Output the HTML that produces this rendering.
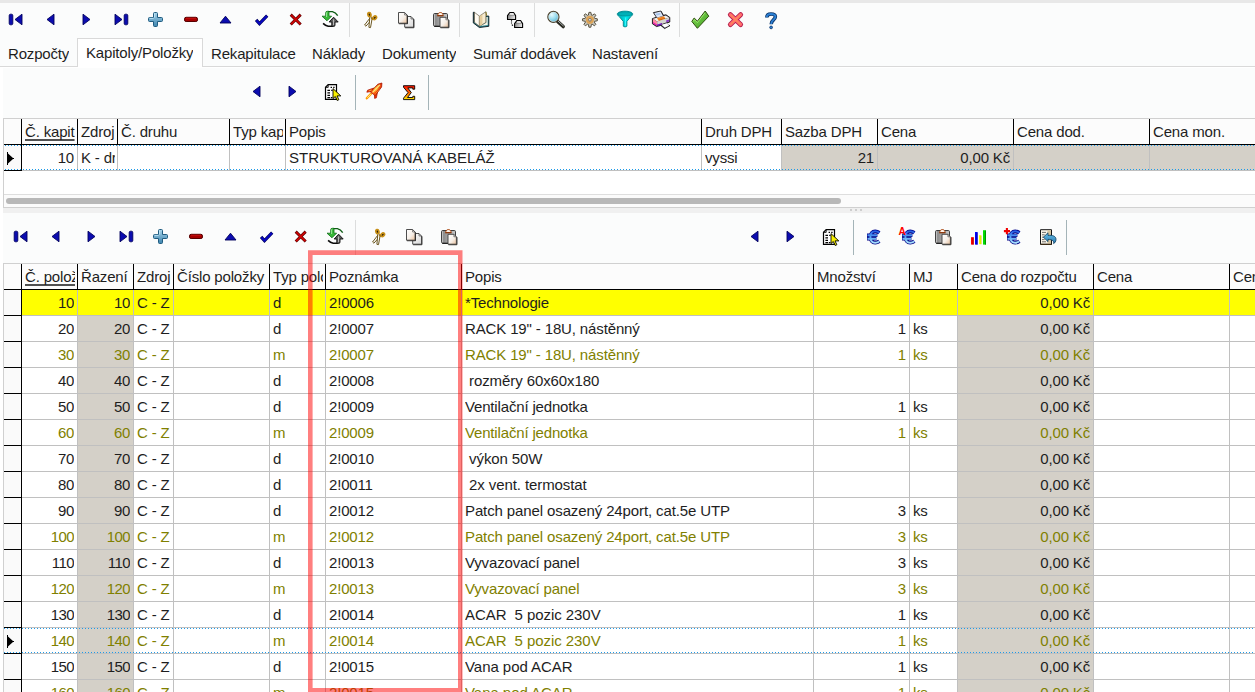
<!DOCTYPE html>
<html><head><meta charset="utf-8"><title>Rozpočty</title>
<style>
html,body{margin:0;padding:0;}
body{width:1255px;height:692px;overflow:hidden;position:relative;background:#fbfcfc;font-family:"Liberation Sans",sans-serif;font-size:15px;color:#1e1e1e;}
.a{position:absolute;}
.t{position:absolute;letter-spacing:-0.165px;white-space:nowrap;overflow:hidden;line-height:18px;height:18px;}
.r{text-align:right;}
.o{color:#808000;}
.vl{position:absolute;width:1px;background:#c0c0c0;}
.hl{position:absolute;height:1px;background:#c0c0c0;}
.bk{background:#000;}
.g{position:absolute;background:#d4d0c8;}
.dot{position:absolute;height:1px;background:repeating-linear-gradient(to right,#1e9be8 0,#1e9be8 1px,transparent 1px,transparent 3px);}
.sep{position:absolute;width:1px;background:#b4bcbc;}
svg{position:absolute;overflow:visible;}
</style></head><body>

<div class="a" style="left:0;top:0;width:1255px;height:3px;background:#e8e8e8"></div>
<div class="hl" style="left:0;top:66px;width:1255px;background:#d9d9d9"></div>
<div class="a" style="left:77px;top:38px;width:126px;height:29px;background:#fff;border:1px solid #d9d9d9;border-bottom:none;box-sizing:border-box"></div>
<div class="t" style="left:8px;top:45px">Rozpočty</div>
<div class="t" style="left:86px;top:44px">Kapitoly/Položky</div>
<div class="t" style="left:211px;top:45px">Rekapitulace</div>
<div class="t" style="left:312px;top:45px">Náklady</div>
<div class="t" style="left:382px;top:45px">Dokumenty</div>
<div class="t" style="left:473px;top:45px">Sumář dodávek</div>
<div class="t" style="left:592px;top:45px">Nastavení</div>
<div class="a" style="left:0;top:67px;width:1255px;height:1px;background:#fff"></div>
<div class="a" style="left:0;top:67px;width:3px;height:625px;background:#fff"></div>
<div class="a" style="left:3px;top:118px;width:1252px;height:90px;background:#fff;border:1px solid #d0d0d0;border-right:none;box-sizing:border-box"></div>
<div class="a" style="left:4px;top:119px;width:1251px;height:25px;background:#fcfcfc"></div>
<div class="g" style="left:782px;top:145px;width:473px;height:25px"></div>
<div class="a" style="left:4px;top:145px;width:17px;height:25px;background:#fafafa"></div>
<div class="vl bk" style="left:21px;top:119px;height:25px"></div>
<div class="vl" style="left:21px;top:145px;height:25px"></div>
<div class="vl bk" style="left:77px;top:119px;height:25px"></div>
<div class="vl" style="left:77px;top:145px;height:25px"></div>
<div class="vl bk" style="left:117px;top:119px;height:25px"></div>
<div class="vl" style="left:117px;top:145px;height:25px"></div>
<div class="vl bk" style="left:229px;top:119px;height:25px"></div>
<div class="vl" style="left:229px;top:145px;height:25px"></div>
<div class="vl bk" style="left:285px;top:119px;height:25px"></div>
<div class="vl" style="left:285px;top:145px;height:25px"></div>
<div class="vl bk" style="left:701px;top:119px;height:25px"></div>
<div class="vl" style="left:701px;top:145px;height:25px"></div>
<div class="vl bk" style="left:781px;top:119px;height:25px"></div>
<div class="vl" style="left:781px;top:145px;height:25px"></div>
<div class="vl bk" style="left:877px;top:119px;height:25px"></div>
<div class="vl" style="left:877px;top:145px;height:25px"></div>
<div class="vl bk" style="left:1013px;top:119px;height:25px"></div>
<div class="vl" style="left:1013px;top:145px;height:25px"></div>
<div class="vl bk" style="left:1149px;top:119px;height:25px"></div>
<div class="vl" style="left:1149px;top:145px;height:25px"></div>
<div class="hl bk" style="left:4px;top:144px;width:1251px"></div>
<div class="vl bk" style="left:21px;top:145px;height:26px"></div>
<div class="hl bk" style="left:4px;top:170px;width:18px"></div>
<div class="hl" style="left:4px;top:170px;width:1251px"></div>
<div class="hl bk" style="left:4px;top:170px;width:18px"></div>
<div class="dot" style="left:5px;top:145px;width:1250px"></div>
<div class="dot" style="left:5px;top:169px;width:1250px"></div>
<div class="t" style="left:25px;top:123px;width:50px"><span style="text-decoration:underline;text-decoration-skip-ink:none;text-underline-offset:1.6px;text-decoration-thickness:1.6px;text-decoration-color:#505050">Č. kapit</span></div>
<div class="t" style="left:81px;top:123px;width:34px"><span>Zdroj</span></div>
<div class="t" style="left:121px;top:123px;width:106px"><span>Č. druhu</span></div>
<div class="t" style="left:233px;top:123px;width:50px"><span>Typ kap</span></div>
<div class="t" style="left:289px;top:123px;width:410px"><span>Popis</span></div>
<div class="t" style="left:705px;top:123px;width:74px"><span>Druh DPH</span></div>
<div class="t" style="left:785px;top:123px;width:90px"><span>Sazba DPH</span></div>
<div class="t" style="left:881px;top:123px;width:130px"><span>Cena</span></div>
<div class="t" style="left:1017px;top:123px;width:130px"><span>Cena dod.</span></div>
<div class="t" style="left:1153px;top:123px;width:100px"><span>Cena mon.</span></div>
<div class="t r" style="left:22px;top:149px;width:52px">10</div>
<div class="t" style="left:81px;top:149px;width:34px">K - dr</div>
<div class="t" style="left:289px;top:149px;width:400px;letter-spacing:0.045px">STRUKTUROVANÁ KABELÁŽ</div>
<div class="t" style="left:705px;top:149px;width:70px">vyssi</div>
<div class="t r" style="left:782px;top:149px;width:92px">21</div>
<div class="t r" style="left:878px;top:149px;width:132px">0,00 Kč</div>
<svg style="left:7px;top:152px" width="8" height="13"><path d="M0 0H1V1.500L6 6H7V7H6L1 11.500V13H0Z" fill="#000"/></svg>
<div class="a" style="left:4px;top:195px;width:1251px;height:12px;background:#fbfbfb"></div>
<div class="hl" style="left:4px;top:194px;width:1251px;background:#dedede"></div>
<div class="a" style="left:6px;top:198px;width:835px;height:6px;border-radius:3px;background:#b8b8b8"></div>
<div class="a" style="left:3px;top:208px;width:1252px;height:5px;background:#f0f0f0"></div>
<div class="a" style="left:850px;top:209px;width:2px;height:2px;background:#cecece"></div>
<div class="a" style="left:855px;top:209px;width:2px;height:2px;background:#cecece"></div>
<div class="a" style="left:860px;top:209px;width:2px;height:2px;background:#cecece"></div>
<div class="a" style="left:3px;top:263px;width:1252px;height:440px;background:#fff;border:1px solid #d0d0d0;border-right:none;box-sizing:border-box"></div>
<div class="a" style="left:4px;top:264px;width:1251px;height:25px;background:#fcfcfc"></div>
<div class="a" style="left:22px;top:290px;width:1233px;height:25px;background:#ffff00"></div>
<div class="g" style="left:78px;top:316px;width:55px;height:376px"></div>
<div class="g" style="left:958px;top:316px;width:135px;height:376px"></div>
<div class="a" style="left:4px;top:290px;width:17px;height:402px;background:#fafafa"></div>
<div class="vl bk" style="left:21px;top:264px;height:25px"></div>
<div class="vl" style="left:21px;top:290px;height:402px"></div>
<div class="vl bk" style="left:77px;top:264px;height:25px"></div>
<div class="vl" style="left:77px;top:290px;height:402px"></div>
<div class="vl bk" style="left:133px;top:264px;height:25px"></div>
<div class="vl" style="left:133px;top:290px;height:402px"></div>
<div class="vl bk" style="left:173px;top:264px;height:25px"></div>
<div class="vl" style="left:173px;top:290px;height:402px"></div>
<div class="vl bk" style="left:269px;top:264px;height:25px"></div>
<div class="vl" style="left:269px;top:290px;height:402px"></div>
<div class="vl bk" style="left:325px;top:264px;height:25px"></div>
<div class="vl" style="left:325px;top:290px;height:402px"></div>
<div class="vl bk" style="left:461px;top:264px;height:25px"></div>
<div class="vl" style="left:461px;top:290px;height:402px"></div>
<div class="vl bk" style="left:813px;top:264px;height:25px"></div>
<div class="vl" style="left:813px;top:290px;height:402px"></div>
<div class="vl bk" style="left:909px;top:264px;height:25px"></div>
<div class="vl" style="left:909px;top:290px;height:402px"></div>
<div class="vl bk" style="left:957px;top:264px;height:25px"></div>
<div class="vl" style="left:957px;top:290px;height:402px"></div>
<div class="vl bk" style="left:1093px;top:264px;height:25px"></div>
<div class="vl" style="left:1093px;top:290px;height:402px"></div>
<div class="vl bk" style="left:1229px;top:264px;height:25px"></div>
<div class="vl" style="left:1229px;top:290px;height:402px"></div>
<div class="vl bk" style="left:21px;top:290px;height:402px"></div>
<div class="hl bk" style="left:4px;top:289px;width:1251px"></div>
<div class="hl" style="left:22px;top:315px;width:1233px"></div>
<div class="hl bk" style="left:4px;top:315px;width:17px"></div>
<div class="hl" style="left:22px;top:341px;width:1233px"></div>
<div class="hl bk" style="left:4px;top:341px;width:17px"></div>
<div class="hl" style="left:22px;top:367px;width:1233px"></div>
<div class="hl bk" style="left:4px;top:367px;width:17px"></div>
<div class="hl" style="left:22px;top:393px;width:1233px"></div>
<div class="hl bk" style="left:4px;top:393px;width:17px"></div>
<div class="hl" style="left:22px;top:419px;width:1233px"></div>
<div class="hl bk" style="left:4px;top:419px;width:17px"></div>
<div class="hl" style="left:22px;top:445px;width:1233px"></div>
<div class="hl bk" style="left:4px;top:445px;width:17px"></div>
<div class="hl" style="left:22px;top:471px;width:1233px"></div>
<div class="hl bk" style="left:4px;top:471px;width:17px"></div>
<div class="hl" style="left:22px;top:497px;width:1233px"></div>
<div class="hl bk" style="left:4px;top:497px;width:17px"></div>
<div class="hl" style="left:22px;top:523px;width:1233px"></div>
<div class="hl bk" style="left:4px;top:523px;width:17px"></div>
<div class="hl" style="left:22px;top:549px;width:1233px"></div>
<div class="hl bk" style="left:4px;top:549px;width:17px"></div>
<div class="hl" style="left:22px;top:575px;width:1233px"></div>
<div class="hl bk" style="left:4px;top:575px;width:17px"></div>
<div class="hl" style="left:22px;top:601px;width:1233px"></div>
<div class="hl bk" style="left:4px;top:601px;width:17px"></div>
<div class="hl" style="left:22px;top:627px;width:1233px"></div>
<div class="hl bk" style="left:4px;top:627px;width:17px"></div>
<div class="hl" style="left:22px;top:653px;width:1233px"></div>
<div class="hl bk" style="left:4px;top:653px;width:17px"></div>
<div class="hl" style="left:22px;top:679px;width:1233px"></div>
<div class="hl bk" style="left:4px;top:679px;width:17px"></div>
<div class="hl" style="left:22px;top:705px;width:1233px"></div>
<div class="hl bk" style="left:4px;top:705px;width:17px"></div>
<div class="dot" style="left:4px;top:628px;width:1251px"></div>
<div class="dot" style="left:4px;top:652px;width:1251px"></div>
<svg style="left:7px;top:635px" width="8" height="13"><path d="M0 0H1V1.500L6 6H7V7H6L1 11.500V13H0Z" fill="#000"/></svg>
<div class="t" style="left:25px;top:268px;width:50px"><span style="text-decoration:underline;text-decoration-skip-ink:none;text-underline-offset:1.6px;text-decoration-thickness:1.6px;text-decoration-color:#505050">Č. polož</span></div>
<div class="t" style="left:81px;top:268px;width:50px"><span>Řazení</span></div>
<div class="t" style="left:137px;top:268px;width:34px"><span>Zdroj</span></div>
<div class="t" style="left:177px;top:268px;width:90px"><span>Číslo položky</span></div>
<div class="t" style="left:273px;top:268px;width:50px"><span>Typ polo</span></div>
<div class="t" style="left:329px;top:268px;width:130px"><span>Poznámka</span></div>
<div class="t" style="left:465px;top:268px;width:346px"><span>Popis</span></div>
<div class="t" style="left:817px;top:268px;width:90px"><span>Množství</span></div>
<div class="t" style="left:913px;top:268px;width:42px"><span>MJ</span></div>
<div class="t" style="left:961px;top:268px;width:130px"><span>Cena do rozpočtu</span></div>
<div class="t" style="left:1097px;top:268px;width:130px"><span>Cena</span></div>
<div class="t" style="left:1233px;top:268px;width:100px"><span>Cen</span></div>
<div class="t r" style="left:22px;top:294px;width:52px;letter-spacing:-0.315px">10</div>
<div class="t r" style="left:78px;top:294px;width:52px;letter-spacing:-0.315px">10</div>
<div class="t" style="left:137px;top:294px;width:34px">C - Z</div>
<div class="t" style="left:273px;top:294px;width:40px">d</div>
<div class="t" style="left:329px;top:294px;width:120px">2!0006</div>
<div class="t" style="left:465px;top:294px;width:340px;letter-spacing:-0.165px">*Technologie</div>
<div class="t r" style="left:958px;top:294px;width:132px">0,00 Kč</div>
<div class="t r" style="left:22px;top:320px;width:52px;letter-spacing:-0.315px">20</div>
<div class="t r" style="left:78px;top:320px;width:52px;letter-spacing:-0.315px">20</div>
<div class="t" style="left:137px;top:320px;width:34px">C - Z</div>
<div class="t" style="left:273px;top:320px;width:40px">d</div>
<div class="t" style="left:329px;top:320px;width:120px">2!0007</div>
<div class="t" style="left:465px;top:320px;width:340px;letter-spacing:-0.135px">RACK 19" - 18U, nástěnný</div>
<div class="t r" style="left:814px;top:320px;width:92px">1</div>
<div class="t" style="left:913px;top:320px;width:40px">ks</div>
<div class="t r" style="left:958px;top:320px;width:132px">0,00 Kč</div>
<div class="t r o" style="left:22px;top:346px;width:52px;letter-spacing:-0.315px">30</div>
<div class="t r o" style="left:78px;top:346px;width:52px;letter-spacing:-0.315px">30</div>
<div class="t o" style="left:137px;top:346px;width:34px">C - Z</div>
<div class="t o" style="left:273px;top:346px;width:40px">m</div>
<div class="t o" style="left:329px;top:346px;width:120px">2!0007</div>
<div class="t o" style="left:465px;top:346px;width:340px;letter-spacing:-0.135px">RACK 19" - 18U, nástěnný</div>
<div class="t r o" style="left:814px;top:346px;width:92px">1</div>
<div class="t o" style="left:913px;top:346px;width:40px">ks</div>
<div class="t r o" style="left:958px;top:346px;width:132px">0,00 Kč</div>
<div class="t r" style="left:22px;top:372px;width:52px;letter-spacing:-0.315px">40</div>
<div class="t r" style="left:78px;top:372px;width:52px;letter-spacing:-0.315px">40</div>
<div class="t" style="left:137px;top:372px;width:34px">C - Z</div>
<div class="t" style="left:273px;top:372px;width:40px">d</div>
<div class="t" style="left:329px;top:372px;width:120px">2!0008</div>
<div class="t" style="left:465px;top:372px;width:340px;letter-spacing:-0.095px">&nbsp;rozměry 60x60x180</div>
<div class="t r" style="left:958px;top:372px;width:132px">0,00 Kč</div>
<div class="t r" style="left:22px;top:398px;width:52px;letter-spacing:-0.315px">50</div>
<div class="t r" style="left:78px;top:398px;width:52px;letter-spacing:-0.315px">50</div>
<div class="t" style="left:137px;top:398px;width:34px">C - Z</div>
<div class="t" style="left:273px;top:398px;width:40px">d</div>
<div class="t" style="left:329px;top:398px;width:120px">2!0009</div>
<div class="t" style="left:465px;top:398px;width:340px;letter-spacing:-0.165px">Ventilační jednotka</div>
<div class="t r" style="left:814px;top:398px;width:92px">1</div>
<div class="t" style="left:913px;top:398px;width:40px">ks</div>
<div class="t r" style="left:958px;top:398px;width:132px">0,00 Kč</div>
<div class="t r o" style="left:22px;top:424px;width:52px;letter-spacing:-0.315px">60</div>
<div class="t r o" style="left:78px;top:424px;width:52px;letter-spacing:-0.315px">60</div>
<div class="t o" style="left:137px;top:424px;width:34px">C - Z</div>
<div class="t o" style="left:273px;top:424px;width:40px">m</div>
<div class="t o" style="left:329px;top:424px;width:120px">2!0009</div>
<div class="t o" style="left:465px;top:424px;width:340px;letter-spacing:-0.165px">Ventilační jednotka</div>
<div class="t r o" style="left:814px;top:424px;width:92px">1</div>
<div class="t o" style="left:913px;top:424px;width:40px">ks</div>
<div class="t r o" style="left:958px;top:424px;width:132px">0,00 Kč</div>
<div class="t r" style="left:22px;top:450px;width:52px;letter-spacing:-0.315px">70</div>
<div class="t r" style="left:78px;top:450px;width:52px;letter-spacing:-0.315px">70</div>
<div class="t" style="left:137px;top:450px;width:34px">C - Z</div>
<div class="t" style="left:273px;top:450px;width:40px">d</div>
<div class="t" style="left:329px;top:450px;width:120px">2!0010</div>
<div class="t" style="left:465px;top:450px;width:340px;letter-spacing:-0.095px">&nbsp;výkon 50W</div>
<div class="t r" style="left:958px;top:450px;width:132px">0,00 Kč</div>
<div class="t r" style="left:22px;top:476px;width:52px;letter-spacing:-0.315px">80</div>
<div class="t r" style="left:78px;top:476px;width:52px;letter-spacing:-0.315px">80</div>
<div class="t" style="left:137px;top:476px;width:34px">C - Z</div>
<div class="t" style="left:273px;top:476px;width:40px">d</div>
<div class="t" style="left:329px;top:476px;width:120px">2!0011</div>
<div class="t" style="left:465px;top:476px;width:340px;letter-spacing:-0.095px">&nbsp;2x vent. termostat</div>
<div class="t r" style="left:958px;top:476px;width:132px">0,00 Kč</div>
<div class="t r" style="left:22px;top:502px;width:52px;letter-spacing:-0.315px">90</div>
<div class="t r" style="left:78px;top:502px;width:52px;letter-spacing:-0.315px">90</div>
<div class="t" style="left:137px;top:502px;width:34px">C - Z</div>
<div class="t" style="left:273px;top:502px;width:40px">d</div>
<div class="t" style="left:329px;top:502px;width:120px">2!0012</div>
<div class="t" style="left:465px;top:502px;width:340px;letter-spacing:-0.115px">Patch panel osazený 24port, cat.5e UTP</div>
<div class="t r" style="left:814px;top:502px;width:92px">3</div>
<div class="t" style="left:913px;top:502px;width:40px">ks</div>
<div class="t r" style="left:958px;top:502px;width:132px">0,00 Kč</div>
<div class="t r o" style="left:22px;top:528px;width:52px;letter-spacing:-0.565px">100</div>
<div class="t r o" style="left:78px;top:528px;width:52px;letter-spacing:-0.565px">100</div>
<div class="t o" style="left:137px;top:528px;width:34px">C - Z</div>
<div class="t o" style="left:273px;top:528px;width:40px">m</div>
<div class="t o" style="left:329px;top:528px;width:120px">2!0012</div>
<div class="t o" style="left:465px;top:528px;width:340px;letter-spacing:-0.115px">Patch panel osazený 24port, cat.5e UTP</div>
<div class="t r o" style="left:814px;top:528px;width:92px">3</div>
<div class="t o" style="left:913px;top:528px;width:40px">ks</div>
<div class="t r o" style="left:958px;top:528px;width:132px">0,00 Kč</div>
<div class="t r" style="left:22px;top:554px;width:52px;letter-spacing:-0.565px">110</div>
<div class="t r" style="left:78px;top:554px;width:52px;letter-spacing:-0.565px">110</div>
<div class="t" style="left:137px;top:554px;width:34px">C - Z</div>
<div class="t" style="left:273px;top:554px;width:40px">d</div>
<div class="t" style="left:329px;top:554px;width:120px">2!0013</div>
<div class="t" style="left:465px;top:554px;width:340px;letter-spacing:-0.165px">Vyvazovací panel</div>
<div class="t r" style="left:814px;top:554px;width:92px">3</div>
<div class="t" style="left:913px;top:554px;width:40px">ks</div>
<div class="t r" style="left:958px;top:554px;width:132px">0,00 Kč</div>
<div class="t r o" style="left:22px;top:580px;width:52px;letter-spacing:-0.565px">120</div>
<div class="t r o" style="left:78px;top:580px;width:52px;letter-spacing:-0.565px">120</div>
<div class="t o" style="left:137px;top:580px;width:34px">C - Z</div>
<div class="t o" style="left:273px;top:580px;width:40px">m</div>
<div class="t o" style="left:329px;top:580px;width:120px">2!0013</div>
<div class="t o" style="left:465px;top:580px;width:340px;letter-spacing:-0.165px">Vyvazovací panel</div>
<div class="t r o" style="left:814px;top:580px;width:92px">3</div>
<div class="t o" style="left:913px;top:580px;width:40px">ks</div>
<div class="t r o" style="left:958px;top:580px;width:132px">0,00 Kč</div>
<div class="t r" style="left:22px;top:606px;width:52px;letter-spacing:-0.565px">130</div>
<div class="t r" style="left:78px;top:606px;width:52px;letter-spacing:-0.565px">130</div>
<div class="t" style="left:137px;top:606px;width:34px">C - Z</div>
<div class="t" style="left:273px;top:606px;width:40px">d</div>
<div class="t" style="left:329px;top:606px;width:120px">2!0014</div>
<div class="t" style="left:465px;top:606px;width:340px;letter-spacing:-0.065px">ACAR&nbsp; 5 pozic 230V</div>
<div class="t r" style="left:814px;top:606px;width:92px">1</div>
<div class="t" style="left:913px;top:606px;width:40px">ks</div>
<div class="t r" style="left:958px;top:606px;width:132px">0,00 Kč</div>
<div class="t r o" style="left:22px;top:632px;width:52px;letter-spacing:-0.565px">140</div>
<div class="t r o" style="left:78px;top:632px;width:52px;letter-spacing:-0.565px">140</div>
<div class="t o" style="left:137px;top:632px;width:34px">C - Z</div>
<div class="t o" style="left:273px;top:632px;width:40px">m</div>
<div class="t o" style="left:329px;top:632px;width:120px">2!0014</div>
<div class="t o" style="left:465px;top:632px;width:340px;letter-spacing:-0.065px">ACAR&nbsp; 5 pozic 230V</div>
<div class="t r o" style="left:814px;top:632px;width:92px">1</div>
<div class="t o" style="left:913px;top:632px;width:40px">ks</div>
<div class="t r o" style="left:958px;top:632px;width:132px">0,00 Kč</div>
<div class="t r" style="left:22px;top:658px;width:52px;letter-spacing:-0.565px">150</div>
<div class="t r" style="left:78px;top:658px;width:52px;letter-spacing:-0.565px">150</div>
<div class="t" style="left:137px;top:658px;width:34px">C - Z</div>
<div class="t" style="left:273px;top:658px;width:40px">d</div>
<div class="t" style="left:329px;top:658px;width:120px">2!0015</div>
<div class="t" style="left:465px;top:658px;width:340px;letter-spacing:-0.04500000000000001px">Vana pod ACAR</div>
<div class="t r" style="left:814px;top:658px;width:92px">1</div>
<div class="t" style="left:913px;top:658px;width:40px">ks</div>
<div class="t r" style="left:958px;top:658px;width:132px">0,00 Kč</div>
<div class="t r o" style="left:22px;top:684px;width:52px;letter-spacing:-0.565px">160</div>
<div class="t r o" style="left:78px;top:684px;width:52px;letter-spacing:-0.565px">160</div>
<div class="t o" style="left:137px;top:684px;width:34px">C - Z</div>
<div class="t o" style="left:273px;top:684px;width:40px">m</div>
<div class="t o" style="left:329px;top:684px;width:120px">2!0015</div>
<div class="t o" style="left:465px;top:684px;width:340px;letter-spacing:-0.04500000000000001px">Vana pod ACAR</div>
<div class="t r o" style="left:814px;top:684px;width:92px">1</div>
<div class="t o" style="left:913px;top:684px;width:40px">ks</div>
<div class="t r o" style="left:958px;top:684px;width:132px">0,00 Kč</div>
<svg width="1255" height="692" viewBox="0 0 1255 692" style="left:0;top:0"><defs>

<linearGradient id="gPlus" x1="0" y1="0" x2="0" y2="1"><stop offset="0" stop-color="#a8d4ea"/><stop offset="1" stop-color="#3d84ae"/></linearGradient>
<linearGradient id="gPage" x1="0" y1="0" x2="1" y2="1"><stop offset="0" stop-color="#ffffff"/><stop offset="0.55" stop-color="#f6efe8"/><stop offset="1" stop-color="#eac09a"/></linearGradient>
<linearGradient id="gPage2" x1="0" y1="0" x2="1" y2="1"><stop offset="0" stop-color="#ffffff"/><stop offset="1" stop-color="#d8d8d8"/></linearGradient>
<linearGradient id="gClip" x1="0" y1="0" x2="1" y2="0"><stop offset="0" stop-color="#e8e8e8"/><stop offset="0.15" stop-color="#8c8c8c"/><stop offset="0.6" stop-color="#b0b0b0"/><stop offset="1" stop-color="#c8c8c8"/></linearGradient>
<linearGradient id="gBox" x1="0" y1="0" x2="1" y2="0"><stop offset="0" stop-color="#8c8c8c"/><stop offset="1" stop-color="#ececec"/></linearGradient>
<radialGradient id="gLens" cx="0.35" cy="0.3" r="0.8"><stop offset="0" stop-color="#e8fbff"/><stop offset="0.5" stop-color="#9adcee"/><stop offset="1" stop-color="#4aa8cc"/></radialGradient>
<linearGradient id="gFun" x1="0" y1="0" x2="1" y2="0"><stop offset="0" stop-color="#00a0a8"/><stop offset="0.6" stop-color="#00e8ee"/><stop offset="1" stop-color="#00a8b0"/></linearGradient>
<linearGradient id="gChk" x1="0" y1="0" x2="1" y2="1"><stop offset="0" stop-color="#8ce05a"/><stop offset="1" stop-color="#3c9c20"/></linearGradient>
<linearGradient id="gSig" x1="0" y1="0" x2="0" y2="1"><stop offset="0" stop-color="#ff1000"/><stop offset="0.55" stop-color="#ff7000"/><stop offset="1" stop-color="#ffe800"/></linearGradient>
<linearGradient id="gEuro" gradientUnits="userSpaceOnUse" x1="0" y1="230" x2="0" y2="244"><stop offset="0" stop-color="#1c50e0"/><stop offset="0.5" stop-color="#58a4f4"/><stop offset="1" stop-color="#b8ecff"/></linearGradient>
<linearGradient id="gArr" x1="0" y1="0" x2="0" y2="1"><stop offset="0" stop-color="#68c0e8"/><stop offset="1" stop-color="#2878b0"/></linearGradient>
<linearGradient id="gRock" x1="0" y1="1" x2="1" y2="0"><stop offset="0" stop-color="#ff3000"/><stop offset="0.5" stop-color="#ffb030"/><stop offset="1" stop-color="#e02000"/></linearGradient>

<g id="iFirst"><rect x="9.2" y="14.2" width="3.6" height="10.6" rx="1.4" fill="#0c0cb0" stroke="#00005c" stroke-width="0.9" stroke-linejoin="round"/><path d="M22 14.2V24.8L15 19.5Z" fill="#0c0cb0" stroke="#00005c" stroke-width="0.9" stroke-linejoin="round"/></g>
<g id="iPrev"><path d="M54 14.2V24.8L47 19.5Z" fill="#0c0cb0" stroke="#00005c" stroke-width="0.9" stroke-linejoin="round"/></g>
<g id="iNext"><path d="M83 14.2V24.8L90 19.5Z" fill="#0c0cb0" stroke="#00005c" stroke-width="0.9" stroke-linejoin="round"/></g>
<g id="iLast"><path d="M115 14.2V24.8L122 19.5Z" fill="#0c0cb0" stroke="#00005c" stroke-width="0.9" stroke-linejoin="round"/><rect x="124.2" y="14.2" width="3.6" height="10.6" rx="1.4" fill="#0c0cb0" stroke="#00005c" stroke-width="0.9" stroke-linejoin="round"/></g>
<g id="iPlus"><path d="M154.50 12.50H156.50Q157.50 12.50 157.50 13.50V17.50H161.50Q162.50 17.50 162.50 18.50V20.50Q162.50 21.50 161.50 21.50H157.50V25.50Q157.50 26.50 156.50 26.50H154.50Q153.50 26.50 153.50 25.50V21.50H149.50Q148.50 21.50 148.50 20.50V18.50Q148.50 17.50 149.50 17.50H153.50V13.50Q153.50 12.50 154.50 12.50Z" fill="url(#gPlus)" stroke="#205c80" stroke-width="1"/><path d="M154.600 13.400V17.600M149.600 18.300H153.600" stroke="#c4e8f8" stroke-width="0.9" fill="none"/></g>
<g id="iMinus"><rect x="184.500" y="17.300" width="13" height="4.200" rx="1.600" fill="#a40000" stroke="#560000" stroke-width="1"/><path d="M186 18.300h10" stroke="#cc1010" stroke-width="0.900"/></g>
<g id="iUp"><path d="M220 23H231L225.500 16.200Z" fill="#0c0cb0" stroke="#00005c" stroke-width="0.9" stroke-linejoin="round"/></g>
<g id="iChk"><path d="M256.100 19.900L259.500 23.700L267.200 15.700" fill="none" stroke="#00005c" stroke-width="3.200" stroke-linecap="butt" stroke-linejoin="miter"/><path d="M256.400 20.300L259.500 23.700L266.900 16" fill="none" stroke="#0808c4" stroke-width="1.900" stroke-linecap="butt" stroke-linejoin="miter"/></g>
<g id="iX"><path d="M290.700 14.600L300.700 24.500M300.700 14.600L290.700 24.500" fill="none" stroke="#5c0000" stroke-width="2.900" stroke-linecap="butt"/><path d="M291.100 15L300.300 24.100M300.300 15L291.100 24.100" fill="none" stroke="#d00404" stroke-width="1.700" stroke-linecap="butt"/></g>
<g id="iRefresh">
<path d="M328 11.600H332.400Q335.600 12.400 337.700 15.600" fill="none" stroke="#0c5c14" stroke-width="1.400"/>
<path d="M322 16.200H325.700V12.800Q325.700 11.300 327.200 11.300H329V16.200H331.600L327 20.800Z" fill="#38b838" stroke="#0c6c14" stroke-width="0.800" stroke-linejoin="round"/>
<path d="M326.600 17V12.900Q326.600 12.200 327.300 12.200" fill="none" stroke="#a4f4a4" stroke-width="0.900"/>
<path d="M332.200 26.200H328.200Q325.400 25.700 323.100 23.400" fill="none" stroke="#0c0c0c" stroke-width="1.600"/>
<path d="M338.200 22H335V25Q335 26.500 333.500 26.500H331.800V22H329.200L333.600 17.200Z" fill="#5c5c5c" stroke="#0c0c0c" stroke-width="0.900" stroke-linejoin="round"/>
<path d="M333.600 19.400V25" stroke="#d0d0d0" stroke-width="0.900"/>
</g>
<g id="iScis">
<path d="M370.300 17.600L364.600 25L365.900 26.200L372 19.400Z" fill="#ffffff" stroke="#5a4408" stroke-width="0.900" stroke-linejoin="round"/>
<path d="M369.900 16.400L368.900 27.300L370.500 27.600L372.300 17.600Z" fill="#ffffff" stroke="#5a4408" stroke-width="0.900" stroke-linejoin="round"/>
<ellipse cx="369.400" cy="14.600" rx="1.500" ry="2" fill="#2c2008" stroke="#c89018" stroke-width="1.700" transform="rotate(-15 369.400 14.600)"/>
<ellipse cx="374.700" cy="17.700" rx="1.500" ry="2" fill="#2c2008" stroke="#c89018" stroke-width="1.700" transform="rotate(48 374.700 17.700)"/>
<path d="M371 18.400L373 19" stroke="#a87810" stroke-width="1.400"/>
</g>
<g id="iCopy">
<path d="M405.100 27.700H413.900V19.300" fill="none" stroke="#141414" stroke-width="1"/>
<path d="M404.700 16.500H411L413.500 19V27.200H404.700Z" fill="url(#gPage2)" stroke="#3a3a3a" stroke-width="0.900"/>
<path d="M411 16.700V19H413.300" fill="none" stroke="#3a3a3a" stroke-width="0.600"/>
<path d="M398.900 23.700H407.500V15.300" fill="none" stroke="#141414" stroke-width="1"/>
<path d="M398.500 12.500H404.600L407.100 15V23.200H398.500Z" fill="url(#gPage)" stroke="#3a3a3a" stroke-width="0.900"/>
<path d="M404.600 12.700V15H406.900" fill="none" stroke="#3a3a3a" stroke-width="0.600"/>
</g>
<g id="iPaste">
<rect x="433.500" y="13.500" width="14" height="12.600" rx="1.200" fill="url(#gClip)" stroke="#2c2c2c" stroke-width="0.900"/>
<path d="M434.200 26.500H447.600" stroke="#141414" stroke-width="0.900"/>
<path d="M437.700 15.600C437.700 13.700 438.900 12.500 440.400 12.500C441.900 12.500 443.100 13.700 443.100 15.600Z" fill="#fff4ec" stroke="#a8440c" stroke-width="1"/>
<path d="M437.200 15.800H443.600" stroke="#7c3008" stroke-width="0.900"/>
<path d="M440.500 27.700H448.900V20.100" fill="none" stroke="#141414" stroke-width="1"/>
<path d="M440 17.300H445.900L448.400 19.800V27.200H440Z" fill="url(#gPage)" stroke="#3a3a3a" stroke-width="0.900"/>
<path d="M445.900 17.500V19.800H448.200" fill="none" stroke="#3a3a3a" stroke-width="0.600"/>
</g>
<g id="iBook">
<path d="M473.300 12.300V22.900L479.400 27.500L488.800 26.300V16.100H485.800V22L479.400 25L474.400 21.600V12.300Z" fill="#2a8c9c" stroke="#0c1418" stroke-width="0.900" stroke-linejoin="round"/>
<path d="M480.200 26.100L487.700 25.100V16.900H486.200V22.800Z" fill="#fbf4e4"/>
<path d="M474.400 12.300L479.400 16.100V26.300L474.400 22.300Z" fill="#fffaf0" stroke="#4c4430" stroke-width="0.600"/>
<path d="M479.400 16.100L485.900 11.700V22.500L479.400 26.300Z" fill="#f8ecd0" stroke="#4c4430" stroke-width="0.600"/>
<path d="M479.600 16.200L482.400 14.300V24.600L479.600 26Z" fill="#e4cc9c"/>
<path d="M485.900 11.900L486.700 15.700" stroke="#807010" stroke-width="0.900"/>
</g>
<g id="iTree">
<path d="M507.500 19.500V15.600L509.800 12.500H513.600L515.600 15.600V19.500Z" fill="url(#gBox)" stroke="#000" stroke-width="1.100" stroke-linejoin="round"/>
<path d="M509.900 13.900H513.500" stroke="#f8f8f8" stroke-width="1.300"/>
<path d="M508.400 15.600H514.800" stroke="#6c6c6c" stroke-width="0.500"/>
<path d="M514.600 27.500V23.600L516.800 20.600H520.600L522.600 23.600V27.500Z" fill="url(#gBox)" stroke="#000" stroke-width="1.100" stroke-linejoin="round"/>
<path d="M516.900 21.900H520.500" stroke="#f8f8f8" stroke-width="1.300"/>
<path d="M515.400 23.600H521.800" stroke="#6c6c6c" stroke-width="0.500"/>
<path d="M511.500 20.200V21.400M511.500 22.600V23.600M511.800 24.600L513 25.600" stroke="#000" stroke-width="1.100"/>
</g>
<g id="iMag">
<path d="M557.600 21.400L563.200 26.600" stroke="#282820" stroke-width="3.400" stroke-linecap="round"/>
<path d="M557.800 20.900L563.400 25.900" stroke="#a8b0b0" stroke-width="1" stroke-linecap="round"/>
<circle cx="553.400" cy="16.900" r="5.500" fill="url(#gLens)" stroke="#48402c" stroke-width="1.300"/>
<circle cx="553.400" cy="16.900" r="4.700" fill="none" stroke="#e4ecec" stroke-width="0.600"/>
</g>
<g id="iGear">
<path d="M588.36 15.15L588.93 12.36L590.87 12.36L591.44 15.15L592.10 15.42L594.47 13.85L595.85 15.23L594.28 17.60L594.55 18.26L597.34 18.83L597.34 20.77L594.55 21.34L594.28 22.00L595.85 24.37L594.47 25.75L592.10 24.18L591.44 24.45L590.87 27.24L588.93 27.24L588.36 24.45L587.70 24.18L585.33 25.75L583.95 24.37L585.52 22.00L585.25 21.34L582.46 20.77L582.46 18.83L585.25 18.26L585.52 17.60L583.95 15.23L585.33 13.85L587.70 15.42Z" fill="#c4c4bc" stroke="#4c4430" stroke-width="0.900" stroke-linejoin="round"/>
<circle cx="589.900" cy="19.800" r="2.900" fill="none" stroke="#dca458" stroke-width="2.500"/>
<circle cx="589.900" cy="19.800" r="1.300" fill="#fff" stroke="#54442c" stroke-width="0.700"/>
</g>
<g id="iFunnel">
<path d="M617.300 14C617.300 12.400 620.700 11.200 625 11.200C629.300 11.200 632.700 12.400 632.700 14C632.700 15 631.800 15.800 630.800 16.600L626.900 21.400V26.200C626.900 27 623.300 27 623.300 26.200V21.400L619.200 16.600C618.200 15.800 617.300 15 617.300 14Z" fill="url(#gFun)" stroke="#00848c" stroke-width="0.900"/>
<ellipse cx="625" cy="13.900" rx="6.900" ry="2.100" fill="#00b0b8" stroke="#008c94" stroke-width="0.700"/>
<path d="M625.500 17.500V25.500" stroke="#40f4f8" stroke-width="1"/>
</g>
<g id="iPrint">
<path d="M652.400 23.800V18.600L656.400 17.200L653.400 12.600L661 11L663.400 15.200L666 14.800L669.800 17.400V22L664.600 24L670 25.600L664.600 28.600L660.800 25.400L656.600 26.600Z" fill="#1c1428" stroke="#141414" stroke-width="0.800" stroke-linejoin="round"/>
<path d="M654.200 13L660.600 11.600L663 16L657 17.600Z" fill="#dce8f8"/>
<path d="M655.600 13.800L660 12.900L660.800 14.400L656.600 15.400Z" fill="#a8c4ec"/>
<path d="M653 18.800L665.800 15.400L669.200 17.600L657 21.600Z" fill="#f0f0ec"/>
<path d="M657 18L664 16.200L666 19.800L659.200 21.800Z" fill="#f08020"/>
<path d="M659 20.300L665 18.500" stroke="#b85808" stroke-width="0.700"/>
<path d="M657 21.600L669.200 17.600V21.600L657.400 25.600Z" fill="#d4d4d0"/>
<path d="M653 18.800L657 21.600V25.800L653 23.400Z" fill="#ff8ca0"/>
<path d="M653 22L657 24.400V26L653 23.600Z" fill="#e020b0"/>
<path d="M657.400 24.600L662 23V24.600L657.400 26.200Z" fill="#7010b8"/>
<path d="M666 20.400L669 19.400V21.400L666.400 22.200Z" fill="#8c30c8"/>
<path d="M661.400 24.800L666.600 23.200L669.200 25.500L664.800 27.800Z" fill="#fff"/>
</g>
<g id="iOk">
<path d="M691.800 21.400L694.200 18L697.400 21.200L705.200 11L708.800 16.200L697.400 28.300Z" fill="url(#gChk)" stroke="#2c4c0c" stroke-width="1" stroke-linejoin="round"/>
<path d="M693.400 21.200L694.400 19.600L697.400 22.600L705 12.800" fill="none" stroke="#a8f078" stroke-width="0.800"/>
</g>
<g id="iNo">
<path d="M730.400 14.700L740.600 24.500M740.600 14.700L730.400 24.500" fill="none" stroke="#b4204c" stroke-width="5" stroke-linecap="round"/>
<path d="M730.400 14.700L740.600 24.500M740.600 14.700L730.400 24.500" fill="none" stroke="#ff6870" stroke-width="3.200" stroke-linecap="round"/>
<path d="M731 15.300L740 23.900M740 15.300L731 23.900" fill="none" stroke="#ff8858" stroke-width="1.400" stroke-linecap="round"/>
</g>
<g id="iHelp">
<path d="M766.800 17.400C766.800 15 768.400 14 771 14C773.800 14 775.400 15 775.400 16.800C775.400 19.600 771.200 19.800 771.200 24.200" fill="none" stroke="#0c3468" stroke-width="3.500" stroke-linecap="butt"/>
<path d="M766.800 17.200C766.800 15 768.400 14 771 14C773.800 14 775.400 15 775.400 16.800C775.400 19.600 771.200 19.800 771.200 23.900" fill="none" stroke="#2c80d4" stroke-width="1.900" stroke-linecap="butt"/>
<circle cx="771.100" cy="27.400" r="1.400" fill="#2c80d4" stroke="#0c3468" stroke-width="0.800"/>
</g>

<g id="iDoc">
<path d="M328.200 84.600H336.500V99.400H325.500V87.300Z" fill="#fff" stroke="#000" stroke-width="1.200"/>
<path d="M328.200 84.800V87.400H325.700Z" fill="#a8a8a8" stroke="#000" stroke-width="0.800"/>
<path d="M330.600 87.400h1.400M333.200 87.400h1.400M327.400 90.300h2.600M331.200 90.300h1.400M327.400 92.800h2.600M327.400 95.300h2.600M327.400 97.600h2.600M330.800 97.600h1.600" stroke="#000" stroke-width="1.300"/>
<path d="M333 88.600V98.600L335.300 96.500L337.200 100.500L338.900 99.700L337 95.900L340.800 95.900Z" fill="#f8f000" stroke="#000" stroke-width="0.900" stroke-linejoin="round"/>
</g>
<g id="iRocket">
<path d="M366.800 98.300L371 93.800" stroke="#ff9c00" stroke-width="2.300" stroke-linecap="round"/>
<path d="M367.600 97.500L370.800 94" stroke="#fff490" stroke-width="0.900" stroke-linecap="round"/>
<path d="M373.800 88L367.600 90.200L366.800 92.200L372 91.400Z" fill="#f03000" stroke="#a81400" stroke-width="0.700" stroke-linejoin="round"/>
<path d="M377.600 91.600L376.400 97.800L374.600 98.400L374.400 94.400Z" fill="#f03000" stroke="#a81400" stroke-width="0.700" stroke-linejoin="round"/>
<path d="M370.400 92L377.800 84.200L381.900 83L381.600 87L375.200 95.600Z" fill="url(#gRock)" stroke="#a81400" stroke-width="0.800" stroke-linejoin="round"/>
<path d="M372.600 92.400L379.800 84.900" stroke="#ffe878" stroke-width="1.300"/>
<path d="M374.600 93.800L380.800 86.600" stroke="#e82000" stroke-width="0.800"/>
<path d="M368.600 91L371.800 90" stroke="#ffb848" stroke-width="0.800"/>
</g>
<g id="iSigma">
<path d="M403.500 85.700H414.700V89.200H412.800V87.900H407.800L411.300 92.600L407.500 97.500H412.800V96.300H414.700V99.600H403.500V98.200L408 92.600L403.500 87.200Z" fill="url(#gSig)" stroke="#000" stroke-width="0.900" stroke-linejoin="miter"/>
</g>

<g id="iEuro">
<path d="M879.400 232.700C878 231.700 876.600 231.300 875.200 231.300C872.200 231.300 870.400 233.700 870.400 237C870.400 240.300 872.200 242.700 875.200 242.700C876.600 242.700 878 242.300 879.400 241.300M867 235.200H877.400M867 238.800H876.400" fill="none" stroke="#040488" stroke-width="3.600" stroke-linecap="butt"/>
<path d="M879.400 232.700C878 231.700 876.600 231.300 875.200 231.300C872.200 231.300 870.400 233.700 870.400 237C870.400 240.300 872.200 242.700 875.200 242.700C876.600 242.700 878 242.300 879.400 241.300M867.500 235.200H877M867.500 238.800H876" fill="none" stroke="url(#gEuro)" stroke-width="1.900" stroke-linecap="butt"/>
</g>
<g id="iBars">
<path d="M971 237.200H973.800V244.600H971Z" fill="#ff0000"/><path d="M973 237.600V244.600" stroke="#a00000" stroke-width="0.900"/>
<path d="M975 232H977.600V244.600H975Z" fill="#0000ff"/><path d="M977 232.600V244.600" stroke="#0000a0" stroke-width="0.900"/>
<path d="M979 235.200H981.200V244.200H979Z" fill="#ffff00"/><path d="M981 235.600V244.200" stroke="#c0c000" stroke-width="0.700"/>
<path d="M983 230.200H986V244.600H983Z" fill="#00e000"/><path d="M985.400 230.800V244.600" stroke="#008000" stroke-width="0.900"/>
</g>
<g id="iDocArr">
<path d="M1040.500 229.700H1051.500V244.300H1040.500Z" fill="#fbf6ea" stroke="#141414" stroke-width="1"/>
<path d="M1047.400 230.200H1051V243.800H1047.400Z" fill="#d4c4a0"/>
<path d="M1040.500 244.400H1051.800" stroke="#3c2c14" stroke-width="1.200"/>
<path d="M1042.400 232.400h3.400M1042.400 234.800h2.400M1042.400 237.200h1.400M1042.400 239.600h2.400M1042.400 241.800h3.400" stroke="#141414" stroke-width="1" stroke-dasharray="1.200 0.800"/>
<path d="M1043.400 237.200L1048 232.800V235.400C1052.400 235 1056 236 1056 239.400C1056 241.400 1055 242.800 1053.600 243.600C1054.200 241.200 1052.400 239.400 1048 239.400V241.600Z" fill="url(#gArr)" stroke="#0c3c5c" stroke-width="0.800" stroke-linejoin="round"/>
</g>

</defs>
<use href="#iFirst"/>
<use href="#iPrev"/>
<use href="#iNext"/>
<use href="#iLast"/>
<use href="#iPlus"/>
<use href="#iMinus"/>
<use href="#iUp"/>
<use href="#iChk"/>
<use href="#iX"/>
<use href="#iRefresh"/>
<use href="#iScis"/>
<use href="#iCopy"/>
<use href="#iPaste"/>
<use href="#iBook"/>
<use href="#iTree"/>
<use href="#iMag"/>
<use href="#iGear"/>
<use href="#iFunnel"/>
<use href="#iPrint"/>
<use href="#iOk"/>
<use href="#iNo"/>
<use href="#iHelp"/>
<rect x="349" y="3" width="1" height="34" fill="#dcdddd"/>
<rect x="459" y="3" width="1" height="34" fill="#dcdddd"/>
<rect x="534" y="3" width="1" height="34" fill="#dcdddd"/>
<rect x="679" y="3" width="1" height="34" fill="#dcdddd"/>
<use href="#iFirst" transform="translate(5,217)"/>
<use href="#iPrev" transform="translate(5,217)"/>
<use href="#iNext" transform="translate(5,217)"/>
<use href="#iLast" transform="translate(5,217)"/>
<use href="#iPlus" transform="translate(5,217)"/>
<use href="#iMinus" transform="translate(5,217)"/>
<use href="#iUp" transform="translate(5,217)"/>
<use href="#iChk" transform="translate(5,217)"/>
<use href="#iX" transform="translate(5,217)"/>
<use href="#iRefresh" transform="translate(5,217)"/>
<use href="#iScis" transform="translate(8,217)"/>
<use href="#iCopy" transform="translate(8,217)"/>
<use href="#iPaste" transform="translate(8,217)"/>
<rect x="355" y="220" width="1" height="35" fill="#dcdddd"/>
<use href="#iPrev" transform="translate(206,72)"/>
<use href="#iNext" transform="translate(206,72)"/>
<use href="#iDoc"/>
<use href="#iRocket"/>
<use href="#iSigma"/>
<rect x="355" y="75" width="1" height="35" fill="#a4b4b8"/>
<rect x="428" y="75" width="1" height="35" fill="#a4b4b8"/>
<use href="#iPrev" transform="translate(704,217)"/>
<use href="#iNext" transform="translate(704,217)"/>
<use href="#iDoc" transform="translate(498,145)"/>
<rect x="853" y="220" width="1" height="35" fill="#a4b4b8"/>
<rect x="1066" y="220" width="1" height="35" fill="#a4b4b8"/>
<use href="#iEuro"/>
<use href="#iEuro" transform="translate(35,0)"/>
<text x="898.6" y="235.4" font-family="Liberation Sans" font-weight="bold" font-size="10.2" fill="#ff0000">A</text>
<use href="#iPaste" transform="translate(502,217)"/>
<use href="#iBars"/>
<use href="#iEuro" transform="translate(140,0)"/>
<path d="M1006.900 228V234.200M1003.900 231.100H1010" stroke="#f00000" stroke-width="2.100"/>
<use href="#iDocArr"/>
</svg>
<svg style="left:0;top:0" width="1255" height="692"><path fill-rule="evenodd" fill="rgba(255,0,0,0.5)" d="M308 250.200H462.500V700H308ZM312.600 254.900V688H458V254.900Z"/></svg>
</body></html>
